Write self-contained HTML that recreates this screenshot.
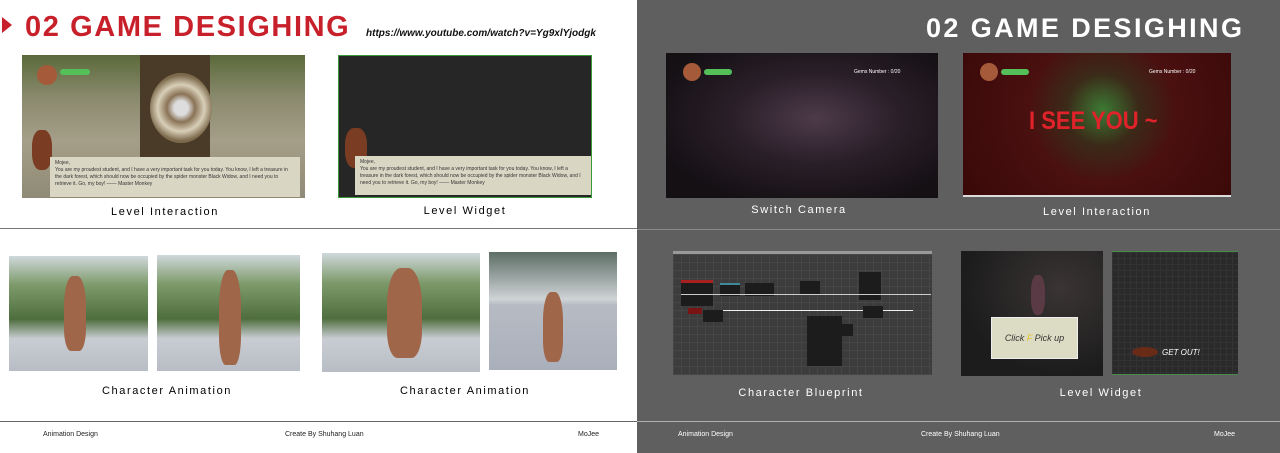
<!DOCTYPE html>
<html><head><meta charset="utf-8"><style>
*{margin:0;padding:0;box-sizing:border-box}
body{width:1280px;height:453px;position:relative;overflow:hidden;background:#fff;font-family:"Liberation Sans",Arial,sans-serif}
.a{position:absolute}
.lbl{position:absolute;font-size:11px;letter-spacing:1.6px;transform:translateX(-50%);white-space:nowrap}
.ft{position:absolute;font-size:7px;top:431px;white-space:nowrap}
.photo{background:linear-gradient(180deg,#cfd8dc 0%,#7d9a6a 25%,#4f6e3e 55%,#c9cdd3 72%,#b8bcc4 100%)}
.fig{position:absolute;border-radius:40% 40% 30% 30%;background:#a0664a}
</style></head><body>
<div class="a" style="left:637px;top:0;width:643px;height:453px;background:#5f5f5f"></div>
<div class="a" style="left:0;top:228px;width:637px;height:1px;background:#777"></div>
<div class="a" style="left:637px;top:229px;width:643px;height:1px;background:#8a8a8a"></div>
<div class="a" style="left:0;top:421px;width:637px;height:1px;background:#666"></div>
<div class="a" style="left:637px;top:421px;width:643px;height:1px;background:#b0b0b0"></div>

<div class="a" style="left:2px;top:17px;width:0;height:0;border-top:8px solid transparent;border-bottom:8px solid transparent;border-left:10px solid #c8202a"></div>
<div class="a" style="left:25px;top:11px;font-size:29px;font-weight:bold;color:#c8202a;letter-spacing:1.6px">02 GAME DESIGHING</div>
<div class="a" style="left:366px;top:28px;font-size:10px;font-weight:bold;font-style:italic;color:#111">https://www.youtube.com/watch?v=Yg9xlYjodgk</div>

<div class="a" style="left:22px;top:55px;width:283px;height:143px;background:linear-gradient(180deg,#5b6a3a 0%,#8a8a6e 30%,#a59e88 60%,#8f8a76 100%)">
  <div class="a" style="left:118px;top:0;width:70px;height:110px;background:#4a3a28"></div>
  <div class="a" style="left:128px;top:18px;width:62px;height:70px;border-radius:50%;background:radial-gradient(circle,#ddd 15%,#8a7356 30%,#d8cfb8 50%,#7d6a4c 70%)"></div>
  <div class="a" style="left:15px;top:10px;width:20px;height:20px;border-radius:50%;background:#a55a3a"></div>
  <div class="a" style="left:38px;top:14px;width:30px;height:6px;border-radius:3px;background:#55c05a"></div>
  <div class="a" style="left:10px;top:75px;width:20px;height:40px;background:#7a3c22;border-radius:40%"></div>
  <div class="a" style="left:28px;top:102px;width:250px;height:40px;background:#d9d7c4;font-size:5px;color:#333;padding:3px 5px;line-height:7px">Mojee,<br>You are my proudest student, and I have a very important task for you today. You know, I left a treasure in the dark forest, which should now be occupied by the spider monster Black Widow, and I need you to retrieve it. Go, my boy! —— Master Monkey</div>
</div>
<div class="a" style="left:338px;top:55px;width:254px;height:143px;background:#262626;border:1px solid #3a9a3a">
  <div class="a" style="left:6px;top:72px;width:22px;height:40px;background:#7a3c22;border-radius:40%"></div>
  <div class="a" style="left:16px;top:100px;width:236px;height:39px;background:#d9d7c4;font-size:5px;color:#333;padding:3px 5px;line-height:7px">Mojee,<br>You are my proudest student, and I have a very important task for you today. You know, I left a treasure in the dark forest, which should now be occupied by the spider monster Black Widow, and I need you to retrieve it. Go, my boy! —— Master Monkey</div>
</div>
<div class="lbl" style="left:165px;top:206px">Level Interaction</div>
<div class="lbl" style="left:465px;top:205px">Level Widget</div>

<div class="a photo" style="left:9px;top:256px;width:139px;height:115px"><div class="fig" style="left:55px;top:20px;width:22px;height:75px"></div></div>
<div class="a photo" style="left:157px;top:255px;width:143px;height:116px"><div class="fig" style="left:62px;top:15px;width:22px;height:95px"></div></div>
<div class="a photo" style="left:322px;top:253px;width:158px;height:119px"><div class="fig" style="left:65px;top:15px;width:35px;height:90px"></div></div>
<div class="a" style="left:489px;top:252px;width:128px;height:118px;background:linear-gradient(180deg,#5d6e66 0%,#cfd3d6 40%,#b6bbc3 45%,#aab0bb 100%)"><div class="fig" style="left:54px;top:40px;width:20px;height:70px"></div></div>
<div class="lbl" style="left:167px;top:385px">Character Animation</div>
<div class="lbl" style="left:465px;top:385px">Character Animation</div>

<div class="ft" style="left:43px;color:#222">Animation Design</div>
<div class="ft" style="left:285px;color:#222">Create By Shuhang Luan</div>
<div class="ft" style="left:578px;color:#222">MoJee</div>

<div class="a" style="left:926px;top:13px;font-size:27px;font-weight:bold;color:#fff;letter-spacing:2.4px">02 GAME DESIGHING</div>

<div class="a" style="left:666px;top:53px;width:272px;height:145px;background:radial-gradient(ellipse at 55% 45%,#4d3a4a 0%,#2a1f28 40%,#141014 80%)">
  <div class="a" style="left:17px;top:10px;width:18px;height:18px;border-radius:50%;background:#a55a3a"></div>
  <div class="a" style="left:38px;top:16px;width:28px;height:6px;border-radius:3px;background:#55c05a"></div>
  <div class="a" style="left:188px;top:16px;font-size:5px;color:#fff">Gems Number : 0/20</div>
</div>
<div class="a" style="left:963px;top:53px;width:268px;height:144px;background:radial-gradient(circle at 52% 40%,#3c7a34 0%,#3b2a18 22%,#4a1010 45%,#3a0808 100%);border-bottom:2px solid #ddd">
  <div class="a" style="left:17px;top:10px;width:18px;height:18px;border-radius:50%;background:#a55a3a"></div>
  <div class="a" style="left:38px;top:16px;width:28px;height:6px;border-radius:3px;background:#55c05a"></div>
  <div class="a" style="left:186px;top:16px;font-size:5px;color:#fff">Gems Number : 0/20</div>
  <div class="a" style="left:66px;top:54px;font-size:25px;font-weight:bold;color:#e0222a;white-space:nowrap;transform:scaleX(0.88);transform-origin:left">I SEE YOU ~</div>
</div>
<div class="lbl" style="left:799px;top:204px;color:#fff">Switch Camera</div>
<div class="lbl" style="left:1097px;top:206px;color:#fff">Level Interaction</div>

<div class="a" style="left:673px;top:251px;width:259px;height:124px;background-color:#3c3c3c;background-image:linear-gradient(#464646 1px,transparent 1px),linear-gradient(90deg,#464646 1px,transparent 1px);background-size:8px 8px;border-top:3px solid #999">
  <div class="a" style="left:8px;top:26px;width:32px;height:26px;background:#1c1c1c;border-top:3px solid #a82020"></div>
  <div class="a" style="left:47px;top:29px;width:20px;height:13px;background:#1c1c1c;border-top:2px solid #3d8a9a"></div>
  <div class="a" style="left:72px;top:29px;width:29px;height:13px;background:#1c1c1c"></div>
  <div class="a" style="left:127px;top:27px;width:20px;height:14px;background:#1c1c1c"></div>
  <div class="a" style="left:186px;top:18px;width:22px;height:14px;background:#1c1c1c"></div>
  <div class="a" style="left:186px;top:32px;width:22px;height:14px;background:#1c1c1c"></div>
  <div class="a" style="left:15px;top:54px;width:14px;height:6px;background:#7a1414"></div>
  <div class="a" style="left:40px;top:56px;width:200px;height:1px;background:#eee"></div>
  <div class="a" style="left:8px;top:40px;width:250px;height:1px;background:#ccc"></div>
  <div class="a" style="left:134px;top:62px;width:35px;height:50px;background:#1c1c1c"></div>
  <div class="a" style="left:30px;top:56px;width:20px;height:12px;background:#1c1c1c"></div>
  <div class="a" style="left:190px;top:52px;width:20px;height:12px;background:#1c1c1c"></div>
  <div class="a" style="left:158px;top:70px;width:22px;height:12px;background:#1c1c1c"></div>
</div>
<div class="a" style="left:961px;top:251px;width:142px;height:125px;background:radial-gradient(ellipse at 70% 30%,#3a3434,#1c1c1c 70%)">
  <div class="a" style="left:70px;top:24px;width:14px;height:40px;background:#5a3a44;border-radius:40%"></div>
  <div class="a" style="left:30px;top:66px;width:87px;height:42px;background:#dcdcc4;border:1px solid #eee;font-size:9px;font-style:italic;color:#333;text-align:center;line-height:40px">Click <span style="color:#e6c020">F</span> Pick up</div>
</div>
<div class="a" style="left:1112px;top:251px;width:126px;height:124px;background-color:#2a2a2a;background-image:linear-gradient(#333 1px,transparent 1px),linear-gradient(90deg,#333 1px,transparent 1px);background-size:6px 6px;border-top:1px solid #4a8a4a;border-bottom:1px solid #4a8a4a">
  <div class="a" style="left:20px;top:95px;width:26px;height:10px;background:#6a2a18;border-radius:50%"></div>
  <div class="a" style="left:50px;top:96px;font-size:8px;font-style:italic;color:#fff">GET OUT!</div>
</div>
<div class="lbl" style="left:801px;top:387px;color:#fff">Character Blueprint</div>
<div class="lbl" style="left:1101px;top:387px;color:#fff">Level Widget</div>

<div class="ft" style="left:678px;color:#fff">Animation Design</div>
<div class="ft" style="left:921px;color:#fff">Create By Shuhang Luan</div>
<div class="ft" style="left:1214px;color:#fff">MoJee</div>
</body></html>
